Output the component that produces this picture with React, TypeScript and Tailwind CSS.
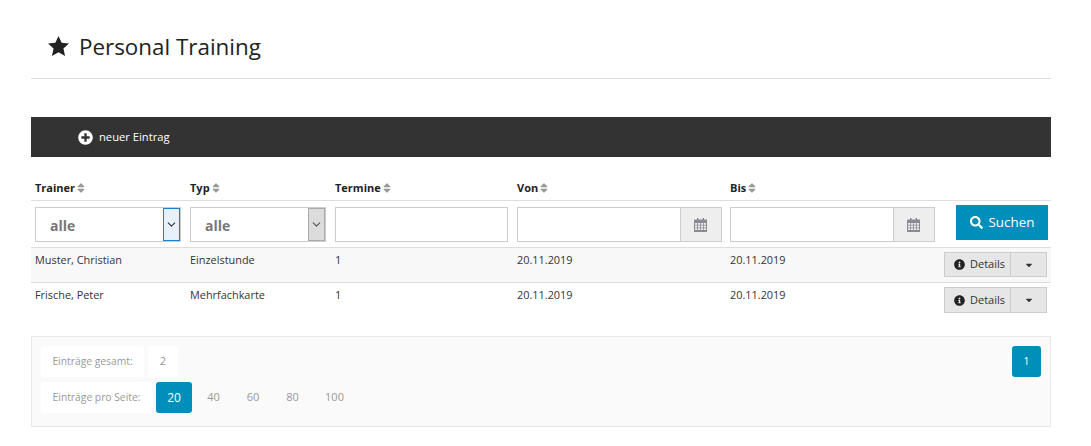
import { ChevronDown } from 'lucide-react';
import {
  FaCaretDown,
  FaInfoCircle,
  FaPlusCircle,
  FaSearch,
  FaSort,
} from 'react-icons/fa';

const columns = 'grid grid-cols-[155px_145px_182px_213px_325px]';

const rows = [
  { trainer: 'Muster, Christian', typ: 'Einzelstunde', striped: true },
  { trainer: 'Frische, Peter', typ: 'Mehrfachkarte', striped: false },
];

function SortHead({ label }: { label: string }) {
  return (
    <div className="flex items-center gap-[2px] pl-1 text-[11px] font-bold text-[#222]">
      {label}
      <FaSort className="h-[12px] w-[8px] text-[#999]" />
    </div>
  );
}

function FakeSelect({ width, focused }: { width: string; focused?: boolean }) {
  return (
    <div className={`flex h-[35px] border border-[#ccc] bg-white ${width}`}>
      <div className="flex-1 pl-[14px] text-[14px] leading-[35px] font-bold text-[#777]">alle</div>
      <div
        className={
          focused
            ? 'flex w-[17px] items-center justify-center border border-[#1b7fd0] bg-[#e6f1fb] text-[#333]'
            : 'flex w-[17px] items-center justify-center border border-[#aaa] bg-[#dcdcdc] text-[#555]'
        }
      >
        <ChevronDown className="h-[13px] w-[13px]" strokeWidth={2} />
      </div>
    </div>
  );
}

function CalendarIcon() {
  return (
    <svg viewBox="0 0 13 14" className="h-[14px] w-[13px] text-[#8a8a94]" fill="currentColor">
      <path d="M3 0h1.5v2H3zM8.5 0H10v2H8.5z" />
      <path
        fillRule="evenodd"
        d="M1 1.5h12v12.5H0V2.5a1 1 0 0 1 1-1zM1 5v1.8h2.2V5zm3 0v1.8h2.1V5zm2.9 0v1.8H9V5zm2.9 0v1.8H12V5zM1 7.6v1.8h2.2V7.6zm3 0v1.8h2.1V7.6zm2.9 0v1.8H9V7.6zm2.9 0v1.8H12V7.6zM1 10.2V12h2.2v-1.8zm3 0V12h2.1v-1.8zm2.9 0V12H9v-1.8zm2.9 0V12H12v-1.8z"
      />
    </svg>
  );
}

function DateInput() {
  return (
    <div className="flex h-[35px] w-[205px] border border-[#ccc] bg-white">
      <div className="flex-1" />
      <div className="flex w-[41px] items-center justify-center border-l border-[#ccc] bg-[#eeeeee] pr-[2px]">
        <CalendarIcon />
      </div>
    </div>
  );
}

function DetailsButton({ height }: { height: string }) {
  return (
    <div className={`flex w-[103px] border border-[#ccc] bg-[#e6e6e6] text-[11px] text-[#333] ${height}`}>
      <div className="flex w-[66px] items-center gap-[6px] border-r border-[#ccc] pl-[9px]">
        <FaInfoCircle className="h-[11px] w-[11px] text-[#222]" />
        <span className="-ml-[1px]">Details</span>
      </div>
      <div className="flex flex-1 items-center justify-center">
        <FaCaretDown className="h-[10px] w-[10px] text-[#333]" />
      </div>
    </div>
  );
}

export default function App() {
  return (
    <div className="h-[446px] overflow-hidden bg-white pr-[40px] pl-[31px] font-['Open_Sans',sans-serif] text-[#333]">
      {/* Title */}
      <div className="flex h-[79px] items-start gap-[10px] border-b border-[#ddd] pt-[30px] pl-[17px]">
        <svg viewBox="0 0 22 21" className="mt-[6px] h-[20px] w-[21px] text-[#222]" fill="currentColor">
          <path d="M11 0l3.3 7.2 7.7.8-5.8 5.2 1.7 7.8L11 17l-6.9 4 1.7-7.8L0 8l7.7-.8z" />
        </svg>
        <h1 className="text-[22.4px] leading-[34px] text-[#222]">Personal Training</h1>
      </div>

      {/* Action bar */}
      <div className="mt-[38px] flex h-[40px] items-center gap-[6px] bg-[#333333] pl-[47px] text-[11.2px] text-white">
        <FaPlusCircle className="h-[15px] w-[15px]" />
        neuer Eintrag
      </div>

      {/* Table head */}
      <div className={`${columns} mt-[23px] h-[21px] items-start border-b border-[#ddd]`}>
        <SortHead label="Trainer" />
        <SortHead label="Typ" />
        <SortHead label="Termine" />
        <SortHead label="Von" />
        <SortHead label="Bis" />
      </div>

      {/* Filter row */}
      <div className={`${columns} h-[47px] border-b border-[#ddd] pt-[6px]`}>
        <div className="pl-1">
          <FakeSelect width="w-[146px]" focused />
        </div>
        <div className="pl-1">
          <FakeSelect width="w-[136px]" />
        </div>
        <div className="pl-1">
          <div className="h-[35px] w-[173px] border border-[#ccc] bg-white" />
        </div>
        <div className="pl-1">
          <DateInput />
        </div>
        <div className="flex justify-between pl-1">
          <DateInput />
          <button className="mt-[-2px] mr-[3px] flex h-[35px] w-[92px] items-center justify-center gap-[6px] bg-[#008fbb] text-[13.4px] text-white">
            <FaSearch className="h-[13px] w-[13px]" />
            Suchen
          </button>
        </div>
      </div>

      {/* Rows */}
      {rows.map((row, i) => (
        <div
          key={row.trainer}
          className={`${columns} h-[35px] border-b text-[10.9px] text-[#333] ${
            row.striped ? 'border-[#ddd] bg-[#f8f8f8]' : 'border-transparent bg-white'
          }`}
        >
          <div className="pt-[4px] pl-1">{row.trainer}</div>
          <div className="pt-[4px] pl-1">{row.typ}</div>
          <div className="pt-[4px] pl-1">1</div>
          <div className="pt-[4px] pl-1">20.11.2019</div>
          <div className="flex justify-between pl-1">
            <span className="pt-[4px]">20.11.2019</span>
            <div className="mt-[4px] mr-[4px]">
              <DetailsButton height={i === 0 ? 'h-[25px]' : 'h-[26px]'} />
            </div>
          </div>
        </div>
      ))}

      {/* Pagination panel */}
      <div className="mt-[18px] flex h-[91px] justify-between border border-[#e8e8e8] bg-[#fafafa] px-[9px] pt-[9px] text-[10.3px] text-[#999]">
        <div className="flex flex-col gap-[5px]">
          <div className="flex gap-[4px]">
            <div className="flex h-[31px] w-[103px] items-center justify-center rounded-[3px] bg-white">Einträge gesamt:</div>
            <div className="flex h-[31px] w-[30px] items-center justify-center rounded-[3px] bg-white text-[11px]">2</div>
          </div>
          <div className="flex items-center text-[11px]">
            <div className="flex h-[31px] w-[111px] items-center justify-center rounded-[3px] bg-white text-[10.3px]">Einträge pro Seite:</div>
            <div className="ml-[4px] flex h-[31px] w-[36px] items-center justify-center rounded-[3px] bg-[#008fbb] text-[12px] text-white">20</div>
            <div className="flex h-[31px] w-[43px] items-center justify-center">40</div>
            <div className="flex h-[31px] w-[36px] items-center justify-center">60</div>
            <div className="flex h-[31px] w-[43px] items-center justify-center">80</div>
            <div className="flex h-[31px] w-[41px] items-center justify-center">100</div>
          </div>
        </div>
        <div className="flex h-[31px] w-[29px] items-center justify-center rounded-[3px] bg-[#008fbb] text-white">1</div>
      </div>
    </div>
  );
}
